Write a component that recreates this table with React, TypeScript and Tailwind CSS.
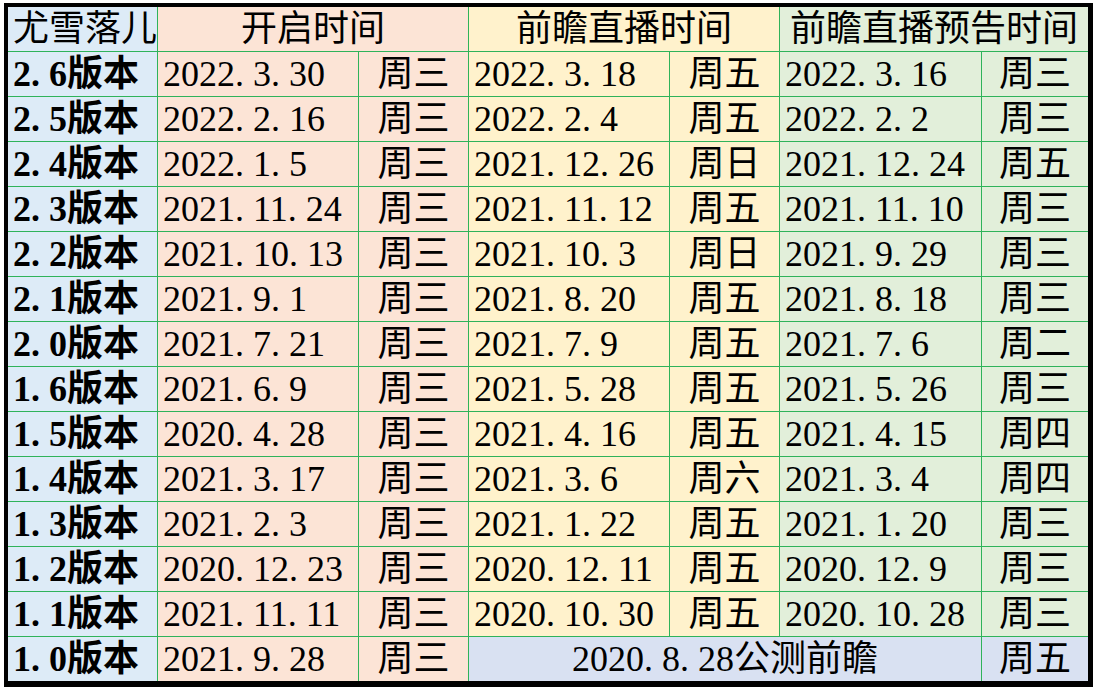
import React from "react";

const rows: string[][] = [
    ["2.6版本", "2022.3.30", "周三", "2022.3.18", "周五", "2022.3.16", "周三"],
    ["2.5版本", "2022.2.16", "周三", "2022.2.4", "周五", "2022.2.2", "周三"],
    ["2.4版本", "2022.1.5", "周三", "2021.12.26", "周日", "2021.12.24", "周五"],
    ["2.3版本", "2021.11.24", "周三", "2021.11.12", "周五", "2021.11.10", "周三"],
    ["2.2版本", "2021.10.13", "周三", "2021.10.3", "周日", "2021.9.29", "周三"],
    ["2.1版本", "2021.9.1", "周三", "2021.8.20", "周五", "2021.8.18", "周三"],
    ["2.0版本", "2021.7.21", "周三", "2021.7.9", "周五", "2021.7.6", "周二"],
    ["1.6版本", "2021.6.9", "周三", "2021.5.28", "周五", "2021.5.26", "周三"],
    ["1.5版本", "2020.4.28", "周三", "2021.4.16", "周五", "2021.4.15", "周四"],
    ["1.4版本", "2021.3.17", "周三", "2021.3.6", "周六", "2021.3.4", "周四"],
    ["1.3版本", "2021.2.3", "周三", "2021.1.22", "周五", "2021.1.20", "周三"],
    ["1.2版本", "2020.12.23", "周三", "2020.12.11", "周五", "2020.12.9", "周三"],
    ["1.1版本", "2021.11.11", "周三", "2020.10.30", "周五", "2020.10.28", "周三"],
];

// column backgrounds, like the sheet's fill colours
const colBg = [
    "bg-[#ddebf7]",
    "bg-[#fce4d6]",
    "bg-[#fce4d6]",
    "bg-[#fff2cc]",
    "bg-[#fff2cc]",
    "bg-[#e2efda]",
    "bg-[#e2efda]",
];

// SimSun-style half-width period
function Txt({ s }: { s: string }) {
    return (
        <span className="whitespace-nowrap">
            {s.split("").map((c, i) =>
                c === "." ? (
                    <span key={i} className="inline-block w-[0.5em]">.</span>
                ) : (
                    <React.Fragment key={i}>{c}</React.Fragment>
                )
            )}
        </span>
    );
}

function Cell({
    children,
    bg,
    center,
    bold,
    span,
}: {
    children: React.ReactNode;
    bg: string;
    center?: boolean;
    bold?: boolean;
    span?: string;
}) {
    return (
        <div
            className={`${bg} ${span ?? ""} flex items-center h-[44px] overflow-hidden ${
                center ? "justify-center" : "justify-start pl-[5px]"
            } ${bold ? "font-bold" : "font-normal"}`}
        >
            <Txt s={String(children)} />
        </div>
    );
}

export default function App() {
    return (
        <div className="w-[1096px] h-[688px] bg-white overflow-hidden pt-[3px] pl-[4px]">
            <div
                className="w-[1089px] border-4 border-r-[5px] border-b-[6px] border-black text-black text-[36px] leading-none"
                style={{ fontFamily: '"Liberation Serif", "Noto Sans CJK SC", serif' }}
            >
                <div className="grid grid-cols-[149px_200px_109px_200px_109px_201px_106px] gap-px bg-[#2fb35a]">
                    {/* header */}
                    <Cell bg={colBg[0]}>尤雪落儿</Cell>
                    <Cell bg={colBg[1]} center span="col-span-2">开启时间</Cell>
                    <Cell bg={colBg[3]} center span="col-span-2">前瞻直播时间</Cell>
                    <Cell bg={colBg[5]} center span="col-span-2">前瞻直播预告时间</Cell>

                    {rows.map((r, ri) =>
                        r.map((v, ci) => (
                            <Cell
                                key={`${ri}-${ci}`}
                                bg={colBg[ci]}
                                bold={ci === 0}
                                center={ci === 2 || ci === 4 || ci === 6}
                            >
                                {v}
                            </Cell>
                        ))
                    )}

                    {/* last row */}
                    <Cell bg={colBg[0]} bold>1.0版本</Cell>
                    <Cell bg={colBg[1]}>2021.9.28</Cell>
                    <Cell bg={colBg[2]} center>周三</Cell>
                    <Cell bg="bg-[#d9e1f2]" center span="col-span-3">2020.8.28公测前瞻</Cell>
                    <Cell bg="bg-[#d9e1f2]" center>周五</Cell>
                </div>
            </div>
        </div>
    );
}
